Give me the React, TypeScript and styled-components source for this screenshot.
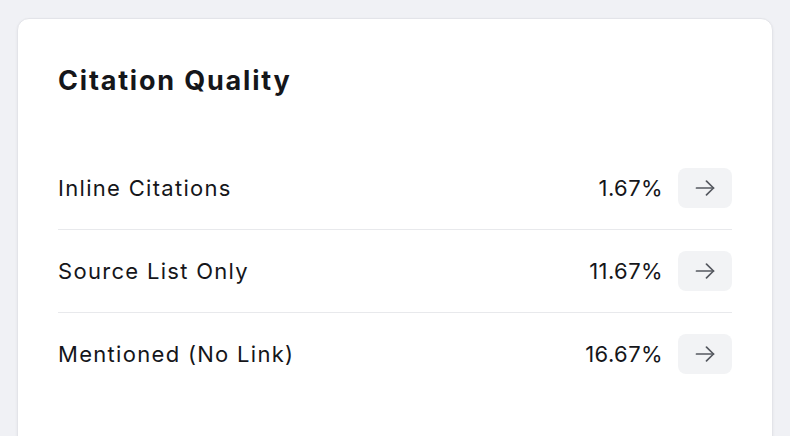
import styled, { createGlobalStyle } from "styled-components";

const GlobalStyle = createGlobalStyle`
  html, body {
    margin: 0;
    padding: 0;
    background: #f0f1f5;
    font-family: "Inter", "Noto Sans", sans-serif;
    color: #15161a;
  }
`;

const Page = styled.div`
  height: 436px;
  overflow: hidden;
  padding: 18px 16px 0 17px;
  box-sizing: border-box;
`;

const Card = styled.section`
  width: 756px;
  min-height: 460px;
  box-sizing: border-box;
  background: #fff;
  border: 1px solid #e3e4e9;
  border-radius: 12px;
  box-shadow: 0 1px 3px rgba(20, 20, 40, 0.06);
  padding: 44px 40px 0 40px;
`;

const Title = styled.h2`
  margin: 0 0 48px 0;
  font-size: 27px;
  line-height: 36px;
  font-weight: 700;
  letter-spacing: 1.8px;
`;

const List = styled.div`
  display: flex;
  flex-direction: column;
`;

const Row = styled.div`
  display: flex;
  align-items: center;
  justify-content: space-between;
  height: 82px;
  border-bottom: 1px solid #e8e9ec;

  &:last-child {
    border-bottom: none;
  }
`;

const Label = styled.span`
  font-size: 22px;
  font-weight: 400;
  letter-spacing: 1.3px;
`;

const Right = styled.div`
  display: flex;
  align-items: center;
  gap: 15px;
`;

const Value = styled.span`
  font-size: 22px;
  font-weight: 400;
  letter-spacing: 0.4px;
`;

const GoButton = styled.button`
  width: 54px;
  height: 40px;
  border: none;
  border-radius: 8px;
  background: #f2f3f5;
  color: #55585f;
  display: flex;
  align-items: center;
  justify-content: center;
  padding: 0;
  cursor: pointer;
`;

const Arrow = () => (
  <svg width="20" height="16" viewBox="0 0 20 16" fill="none" stroke="currentColor" strokeWidth="1.7" strokeLinecap="round" strokeLinejoin="round">
    <path d="M1.5 8h17" />
    <path d="M11.5 1.2 18.5 8l-7 6.8" />
  </svg>
);

const rows = [
  { label: "Inline Citations", value: "1.67%" },
  { label: "Source List Only", value: "11.67%" },
  { label: "Mentioned (No Link)", value: "16.67%" },
];

export default function App() {
  return (
    <>
      <GlobalStyle />
      <Page>
        <Card>
          <Title>Citation Quality</Title>
          <List>
            {rows.map((r) => (
              <Row key={r.label}>
                <Label>{r.label}</Label>
                <Right>
                  <Value>{r.value}</Value>
                  <GoButton aria-label={`View ${r.label}`}>
                    <Arrow />
                  </GoButton>
                </Right>
              </Row>
            ))}
          </List>
        </Card>
      </Page>
    </>
  );
}
